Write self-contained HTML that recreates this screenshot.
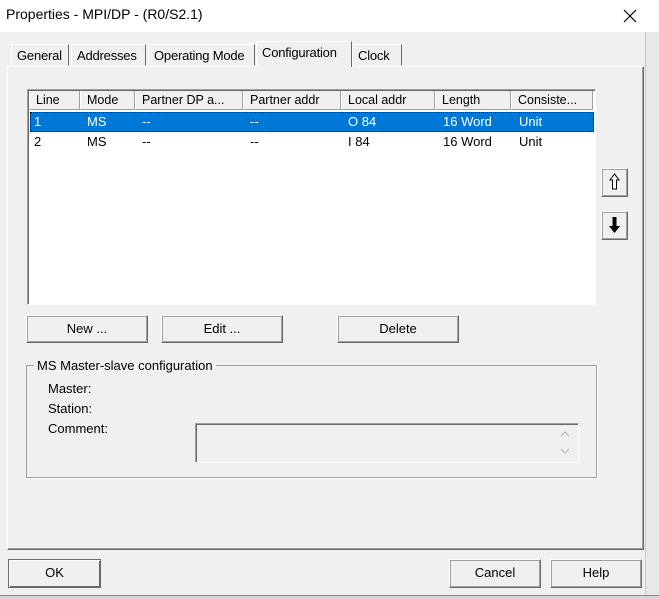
<!DOCTYPE html>
<html><head><style>
*{margin:0;padding:0;box-sizing:border-box}
body{width:659px;height:599px;background:#f0f0f0;font-family:"Liberation Sans",sans-serif;font-size:12px;color:#000;position:relative;overflow:hidden}
.a{position:absolute}
.btn{position:absolute;background:#f0f0f0;border:1px solid;border-color:#fff #696969 #696969 #fff;box-shadow:1px 1px 0 #a0a0a0 inset,inset -1px -1px 0 #a0a0a0;text-align:center;font-size:13px}
.tab{position:absolute;top:44px;height:22px;border:1px solid;border-color:#fff #696969 transparent #fff;font-size:13px;padding:3px 4px 0 5px;letter-spacing:-0.2px}
.hd{position:absolute;top:91px;height:19px;border-right:1px solid #a0a0a0;border-bottom:1px solid #a0a0a0;border-left:1px solid #fff;font-size:12.5px;padding:2px 0 0 6px;background:#f0f0f0}
.c{position:absolute;font-size:13px}
</style></head><body>
<div class="a" style="left:0;top:0;width:659px;height:32px;background:#fff"></div>
<div class="a" style="left:6px;top:6px;font-size:14px">Properties - MPI/DP - (R0/S2.1)</div>
<svg class="a" style="left:623px;top:9px" width="14" height="14"><path d="M1 1L13 13M13 1L1 13" stroke="#000" stroke-width="1.2"/></svg>
<div class="a" style="left:645px;top:32px;width:14px;height:567px;background:#e8e8e8;border-left:1px solid #c8c8c8"></div>
<div class="a" style="left:7px;top:66px;width:637px;height:484px;border:1px solid;border-color:#fff #696969 #696969 #fff;box-shadow:inset -1px -1px 0 #a0a0a0"></div>
<div class="tab" style="left:11px;width:58px">General</div>
<div class="tab" style="left:71px;width:75px">Addresses</div>
<div class="tab" style="left:148px;width:107px">Operating Mode</div>
<div class="tab" style="left:256px;top:41px;height:26px;width:96px;background:#f0f0f0;border-bottom:none">Configuration</div>
<div class="tab" style="left:352px;width:50px">Clock</div>
<div class="a" style="left:27px;top:89px;width:569px;height:216px;background:#fff;border:1px solid;border-color:#a0a0a0 #fff #fff #a0a0a0;box-shadow:inset 1px 1px 0 #696969"></div>
<div class="hd" style="left:29px;width:51px">Line</div>
<div class="hd" style="left:80px;width:55px">Mode</div>
<div class="hd" style="left:135px;width:108px">Partner DP a...</div>
<div class="hd" style="left:243px;width:98px">Partner addr</div>
<div class="hd" style="left:341px;width:94px">Local addr</div>
<div class="hd" style="left:435px;width:76px">Length</div>
<div class="hd" style="left:511px;width:82px">Consiste...</div>
<div class="a" style="left:30px;top:112px;width:564px;height:20px;background:#0078d7;outline:1px dotted #000;outline-offset:-1px"></div>
<div class="c" style="left:34px;top:114px;color:#fff">1</div><div class="c" style="left:87px;top:114px;color:#fff">MS</div><div class="c" style="left:142px;top:114px;color:#fff">--</div><div class="c" style="left:250px;top:114px;color:#fff">--</div><div class="c" style="left:348px;top:114px;color:#fff">O 84</div><div class="c" style="left:443px;top:114px;color:#fff">16 Word</div><div class="c" style="left:519px;top:114px;color:#fff">Unit</div>
<div class="c" style="left:34px;top:134px">2</div><div class="c" style="left:87px;top:134px">MS</div><div class="c" style="left:142px;top:134px">--</div><div class="c" style="left:250px;top:134px">--</div><div class="c" style="left:348px;top:134px">I 84</div><div class="c" style="left:443px;top:134px">16 Word</div><div class="c" style="left:519px;top:134px">Unit</div>
<div class="btn" style="left:601px;top:168px;width:27px;height:29px"><svg width="25" height="27"><path d="M12.5 5L8 11H10.5V20H14.5V11H17Z" fill="#fff" stroke="#000" stroke-width="1"/></svg></div>
<div class="btn" style="left:601px;top:211px;width:27px;height:29px"><svg width="25" height="27"><path d="M10.5 5H14.5V14H18L12.5 21L7 14H10.5Z" fill="#000"/></svg></div>
<div class="btn" style="left:26px;top:315px;width:122px;height:28px;line-height:25px">New ...</div>
<div class="btn" style="left:161px;top:315px;width:122px;height:28px;line-height:25px">Edit ...</div>
<div class="btn" style="left:337px;top:315px;width:122px;height:28px;line-height:25px">Delete</div>
<div class="a" style="left:26px;top:365px;width:571px;height:113px;border:1px solid #a0a0a0;box-shadow:1px 1px 0 #fff"></div>
<div class="a" style="left:34px;top:358px;background:#f0f0f0;padding:0 3px;font-size:13px">MS Master-slave configuration</div>
<div class="c" style="left:48px;top:381px">Master:</div>
<div class="c" style="left:48px;top:401px">Station:</div>
<div class="c" style="left:48px;top:421px">Comment:</div>
<div class="a" style="left:195px;top:423px;width:384px;height:40px;border:1px solid;border-color:#a0a0a0 #fff #fff #a0a0a0;box-shadow:inset 1px 1px 0 #696969"></div>
<svg class="a" style="left:558px;top:428px" width="14" height="30"><path d="M3 8L7 4L11 8M3 21L7 25L11 21" stroke="#b0b0b0" fill="none"/></svg>
<div class="btn" style="left:8px;top:559px;width:93px;height:29px;line-height:26px;border-color:#696969;box-shadow:inset 1px 1px 0 #fff,inset -1px -1px 0 #696969">OK</div>
<div class="btn" style="left:449px;top:559px;width:92px;height:29px;line-height:26px">Cancel</div>
<div class="btn" style="left:550px;top:559px;width:92px;height:29px;line-height:26px">Help</div>
<div class="a" style="left:0;top:595px;width:659px;height:4px;background:#d8d8d8;border-top:1px solid #888"></div>
</body></html>
